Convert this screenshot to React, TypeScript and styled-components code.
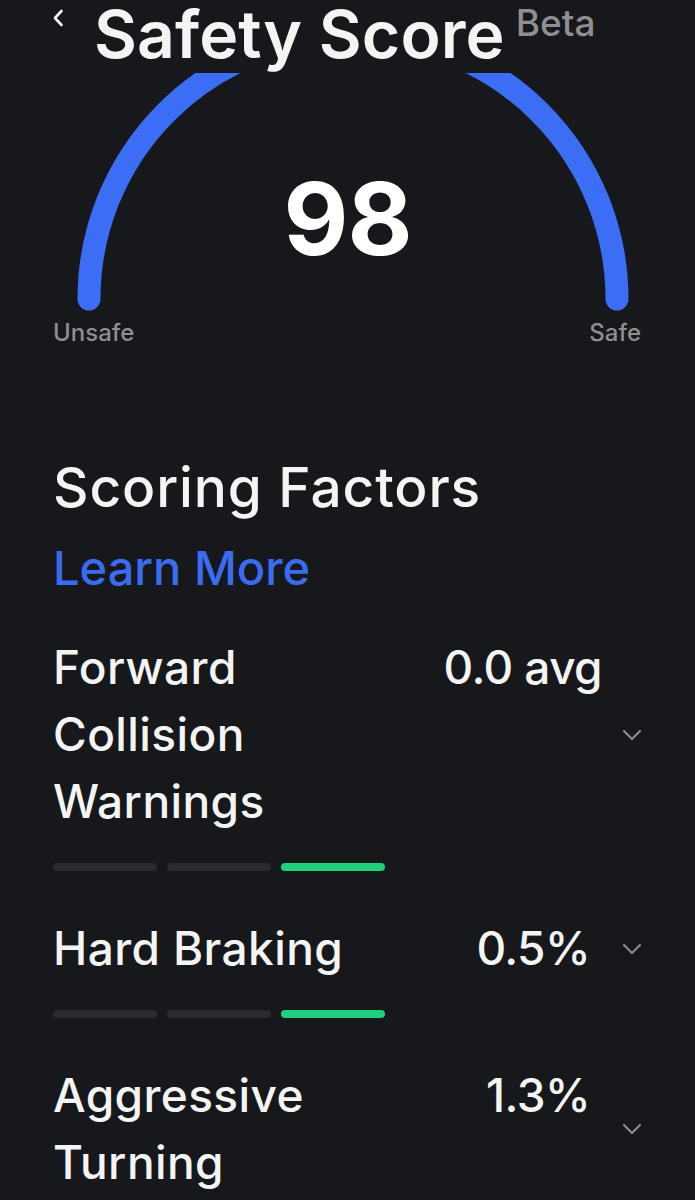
import styled, { createGlobalStyle } from "styled-components";

const GlobalStyle = createGlobalStyle`
  html, body {
    margin: 0;
    padding: 0;
    background: #17181b;
  }
  body {
    font-family: Inter, "Noto Sans", "Liberation Sans", sans-serif;
    color: #f4f4f5;
    -webkit-font-smoothing: antialiased;
  }
`;

const Page = styled.main`
  width: 695px;
  min-height: 1200px;
  background: #17181b;
  overflow: hidden;
`;

const Header = styled.header`
  display: flex;
  align-items: flex-start;
  height: 73px;
  padding-left: 52px;
  box-sizing: border-box;
`;

const BackButton = styled.button`
  background: none;
  border: none;
  padding: 0;
  margin-top: 9px;
  width: 12px;
  height: 18px;
  color: #f4f4f5;
  display: flex;
`;

const Title = styled.h1`
  margin: 0 0 0 30px;
  font-size: 66px;
  font-weight: 600;
  line-height: 68px;
  letter-spacing: 0.1px;
`;

const Beta = styled.span`
  margin: 2px 0 0 11px;
  font-size: 37px;
  font-weight: 500;
  color: #8e8e93;
  line-height: 42px;
`;

const Gauge = styled.div`
  position: relative;
  height: 240px;
`;

const Score = styled.div`
  position: absolute;
  left: 0;
  right: 0;
  top: 86px;
  text-align: center;
  font-size: 100px;
  font-weight: 700;
  line-height: 120px;
  color: #ffffff;
  letter-spacing: -1px;
`;

const GaugeLabels = styled.div`
  display: flex;
  justify-content: space-between;
  padding: 0 54px 0 53px;
  font-size: 24px;
  font-weight: 500;
  color: #8e8e93;
  line-height: 40px;
`;

const Factors = styled.section`
  padding: 97px 0 0 53px;
`;

const SectionTitle = styled.h2`
  margin: 0;
  font-size: 55px;
  font-weight: 500;
  line-height: 74px;
  letter-spacing: 0.9px;
`;

const LearnMore = styled.a`
  display: block;
  margin-top: 14px;
  font-size: 47px;
  font-weight: 500;
  line-height: 60px;
  color: #3a6cf2;
  text-decoration: none;
`;

const FactorList = styled.ul`
  list-style: none;
  margin: 36px 0 0;
  padding: 0;
  display: flex;
  flex-direction: column;
  gap: 44px;
`;

const Factor = styled.li`
  display: flex;
  flex-direction: column;
  gap: 28px;
`;

const FactorRow = styled.div`
  display: grid;
  grid-template-columns: 1fr auto 73px;
  align-items: center;
`;

const FactorName = styled.span`
  font-size: 46px;
  font-weight: 500;
  line-height: 67px;
  letter-spacing: 0.4px;
  max-width: 310px;
`;

const FactorValue = styled.span<{ $inset: number }>`
  align-self: start;
  font-size: 46px;
  font-weight: 500;
  line-height: 67px;
  letter-spacing: -0.6px;
  margin-right: ${({ $inset }) => $inset}px;
`;

const Chevron = styled.span`
  display: flex;
  color: #8a8a8e;
`;

const Bars = styled.div`
  display: flex;
  gap: 10px;
`;

const Bar = styled.span<{ $on: boolean }>`
  width: 104px;
  height: 8px;
  border-radius: 4px;
  background: ${({ $on }) => ($on ? "#20d07a" : "#2a2b2f")};
`;

const factors = [
  { name: "Forward Collision Warnings", value: "0.0 avg", inset: 20, level: 3 },
  { name: "Hard Braking", value: "0.5%", inset: 32, level: 3 },
  { name: "Aggressive Turning", value: "1.3%", inset: 32, level: 3 },
];

function DownChevron() {
  return (
    <svg width="20" height="12" viewBox="0 0 20 12" fill="none">
      <path
        d="M2 2 L10 10 L18 2"
        stroke="currentColor"
        strokeWidth="2.2"
        strokeLinecap="round"
        strokeLinejoin="round"
      />
    </svg>
  );
}

export default function App() {
  return (
    <Page>
      <GlobalStyle />
      <Header>
        <BackButton aria-label="Back">
          <svg width="12" height="18" viewBox="0 0 12 18" fill="none">
            <path
              d="M9.5 2 L3 9 L9.5 16"
              stroke="currentColor"
              strokeWidth="2.6"
              strokeLinecap="round"
              strokeLinejoin="round"
            />
          </svg>
        </BackButton>
        <Title>Safety Score</Title>
        <Beta>Beta</Beta>
      </Header>

      <Gauge>
        <svg width="695" height="240" viewBox="0 73 695 240">
          <path
            d="M 89 299 A 264 264 0 0 1 617 299"
            stroke="#3b6ef5"
            strokeWidth="23"
            strokeLinecap="round"
            fill="none"
          />
        </svg>
        <Score>98</Score>
      </Gauge>
      <GaugeLabels>
        <span>Unsafe</span>
        <span>Safe</span>
      </GaugeLabels>

      <Factors>
        <SectionTitle>Scoring Factors</SectionTitle>
        <LearnMore href="#">Learn More</LearnMore>
        <FactorList>
          {factors.map((factor) => (
            <Factor key={factor.name}>
              <FactorRow>
                <FactorName>{factor.name}</FactorName>
                <FactorValue $inset={factor.inset}>{factor.value}</FactorValue>
                <Chevron>
                  <DownChevron />
                </Chevron>
              </FactorRow>
              <Bars>
                {[1, 2, 3].map((i) => (
                  <Bar key={i} $on={i === factor.level} />
                ))}
              </Bars>
            </Factor>
          ))}
        </FactorList>
      </Factors>
    </Page>
  );
}
